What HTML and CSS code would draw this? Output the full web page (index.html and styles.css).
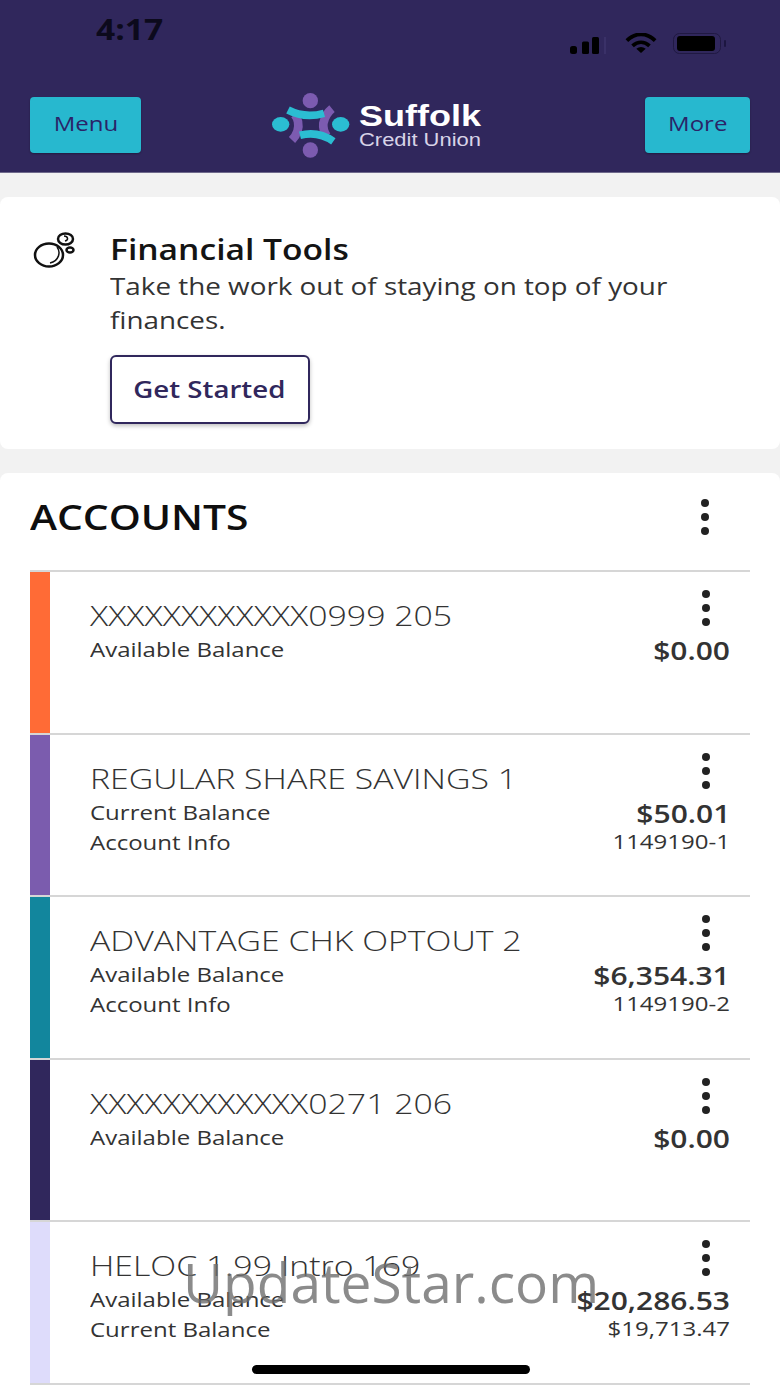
FILE: index.html
```html
<!DOCTYPE html>
<html lang="en">
<head>
<meta charset="utf-8">
<title>Suffolk Credit Union</title>
<link rel="stylesheet" href="styles.css">
</head>
<body>
<div class="screen">
  <header class="top">
    <div class="status">
      <span class="time">4:17</span>
      <div class="status-icons">
        <svg class="signal" width="37" height="17" viewBox="0 0 37 17"><rect x="0" y="9" width="7" height="8" rx="2.500"/><rect x="12" y="4.500" width="7" height="12.500" rx="1.500"/><rect x="22" y="0" width="7" height="17" rx="1.500"/><rect x="34" y="0" width="2" height="17" fill="#3a3168"/></svg>
        <svg class="wifi" width="32" height="20" viewBox="0 0 34 21"><path d="M2 8C11 -1 23 -1 32 8" fill="none" stroke="#000" stroke-width="4"/><path d="M8 13.500C13.500 8.500 20.500 8.500 26 13.500" fill="none" stroke="#000" stroke-width="4"/><path d="M12 16.500Q17 13 22 16.500L17 21Z"/></svg>
        <svg class="battery" width="54" height="21" viewBox="0 0 54 21"><rect x="0.500" y="0.500" width="47" height="20" rx="6" fill="none" stroke="#201942" stroke-width="1"/><rect x="4" y="3" width="38" height="15" rx="3"/><rect x="51" y="7" width="2" height="7" rx="1" fill="#1c1640"/></svg>
      </div>
    </div>
    <nav class="bar">
      <button class="nav-btn menu"><span class="btn-text">Menu</span></button>
      <div class="logo">
        <svg class="logo-mark" width="90" height="70" viewBox="0 0 270 210">
          <ellipse cx="127" cy="32" rx="23" ry="23" fill="#7c5bb0"/>
          <ellipse cx="127" cy="180" rx="23" ry="23" fill="#7c5bb0"/>
          <ellipse cx="38" cy="103" rx="26" ry="22" fill="#2bbdd2"/>
          <ellipse cx="218" cy="103" rx="26" ry="22" fill="#2bbdd2"/>
          <path d="M72 150Q96 125 90 95Q88 84 80 74" fill="none" stroke="#7c5bb0" stroke-width="26"/>
          <path d="M192 56Q172 72 166 100Q164 120 176 138" fill="none" stroke="#7c5bb0" stroke-width="26"/>
          <path d="M60 60Q110 86 168 70" fill="none" stroke="#2bbdd2" stroke-width="23"/>
          <path d="M96 136Q150 122 196 154" fill="none" stroke="#2bbdd2" stroke-width="23"/>
        </svg>
        <div class="logo-text"><span class="logo-name">Suffolk</span><span class="logo-sub">Credit Union</span></div>
      </div>
      <button class="nav-btn more"><span class="btn-text">More</span></button>
    </nav>
  </header>

  <section class="card tools">
    <svg class="tools-icon" width="46" height="40" viewBox="0 0 46 40" fill="none" stroke="#111" stroke-width="2.500">
      <ellipse cx="19" cy="25" rx="14" ry="11.500"/>
      <path d="M27 17C31 22 29 31 20 33" stroke-width="1.500"/>
      <ellipse cx="35.500" cy="9" rx="7.500" ry="5.500"/>
      <path d="M34 6C38 6 39 10 35 11" stroke-width="1.500"/>
      <ellipse cx="40" cy="20" rx="3.500" ry="2.500"/>
    </svg>
    <div class="tools-body">
      <h2 class="tools-title">Financial Tools</h2>
      <p class="tools-text">Take the work out of staying on top of your finances.</p>
      <button class="start"><span class="btn-text">Get Started</span></button>
    </div>
  </section>

  <section class="card accounts">
    <div class="acc-head">
      <h1 class="acc-title">ACCOUNTS</h1>
      <span class="kebab big"><i></i><i></i><i></i></span>
    </div>
    <ul class="acc-list">
      <li class="row c1">
        <div class="row-main">
          <div class="name">XXXXXXXXXXXX0999 205</div>
          <div class="label">Available Balance</div>
        </div>
        <div class="row-side">
          <span class="kebab"><i></i><i></i><i></i></span>
          <div class="amount">$0.00</div>
        </div>
      </li>
      <li class="row c2">
        <div class="row-main">
          <div class="name">REGULAR SHARE SAVINGS 1</div>
          <div class="label">Current Balance</div>
          <div class="label">Account Info</div>
        </div>
        <div class="row-side">
          <span class="kebab"><i></i><i></i><i></i></span>
          <div class="amount">$50.01</div>
          <div class="sub">1149190-1</div>
        </div>
      </li>
      <li class="row c3">
        <div class="row-main">
          <div class="name">ADVANTAGE CHK OPTOUT 2</div>
          <div class="label">Available Balance</div>
          <div class="label">Account Info</div>
        </div>
        <div class="row-side">
          <span class="kebab"><i></i><i></i><i></i></span>
          <div class="amount">$6,354.31</div>
          <div class="sub">1149190-2</div>
        </div>
      </li>
      <li class="row c4">
        <div class="row-main">
          <div class="name">XXXXXXXXXXXX0271 206</div>
          <div class="label">Available Balance</div>
        </div>
        <div class="row-side">
          <span class="kebab"><i></i><i></i><i></i></span>
          <div class="amount">$0.00</div>
        </div>
      </li>
      <li class="row c5">
        <div class="row-main">
          <div class="name">HELOC 1.99 Intro 169</div>
          <div class="label">Available Balance</div>
          <div class="label">Current Balance</div>
        </div>
        <div class="row-side">
          <span class="kebab"><i></i><i></i><i></i></span>
          <div class="amount">$20,286.53</div>
          <div class="sub">$19,713.47</div>
        </div>
      </li>
    </ul>
  </section>

  <div class="home-bar"></div>
  <div class="watermark">UpdateStar.com</div>
</div>
</body>
</html>
```
FILE: styles.css
```css
* { box-sizing: border-box; }
html, body { margin: 0; padding: 0; }
body { background: #f2f2f2; font-family: "Open Sans", sans-serif; color: #333; }
.screen { position: relative; width: 780px; height: 1387px; overflow: hidden; background: #f2f2f2; }

/* The reference is stretched horizontally, so its text is widened the same way */
.time, .btn-text, .logo-name, .logo-sub, .tools-title, .tools-text, .acc-title, .name, .label {
  transform: scaleX(1.2);
  transform-origin: left center;
}
.amount, .sub { transform: scaleX(1.2); transform-origin: right center; }
.btn-text { display: inline-block; transform-origin: center; }

.top { height: 173px; background: #30275c; border-bottom: 1px solid #6f6a8c; padding: 0 30px; display: flex; flex-direction: column; }
.status { height: 97px; display: flex; justify-content: space-between; }
.time { margin: 11px 0 0 66px; font-size: 28px; line-height: 36px; font-weight: 700; color: #0c0a1c; }
.status-icons { display: flex; align-items: flex-start; margin: 33px 23px 0 0; }
.signal { fill: #000; margin: 4px 18px 0 0; }
.wifi { fill: #000; margin-right: 16px; }
.battery { fill: #000; }

.bar { display: flex; justify-content: space-between; align-items: flex-start; }
.nav-btn { height: 56px; border: 0; border-radius: 4px; background: #27b8cf; color: #2a2468; font-family: "Open Sans", sans-serif; font-size: 20px; padding: 0 0 4px; box-shadow: 0 1px 2px rgba(0,0,0,0.300); }
.menu { width: 111px; }
.more { width: 105px; }
.logo { display: flex; align-items: center; gap: 1px; width: 214px; margin: -7px 36px 0 0; }
.logo-mark { flex: none; }
.logo-text { display: flex; flex-direction: column; width: 122px; color: #fff; font-family: "Liberation Sans", sans-serif; }
.logo-name { font-size: 30px; line-height: 28px; font-weight: 700; white-space: nowrap; }
.logo-sub { font-size: 18.300px; line-height: 19px; color: #d8d4e8; white-space: nowrap; }

.card { background: #fff; border-radius: 8px; }
.tools { margin-top: 24px; height: 252px; padding: 33px 30px 0 30px; display: flex; }
.tools-icon { flex: none; margin-right: 34px; }
.tools-body { flex: 1; }
.tools-title { margin: 0 0 1px; font-size: 28px; line-height: 38px; font-weight: 600; color: #141414; white-space: nowrap; }
.tools-text { margin: 0; width: 490px; font-size: 23.200px; line-height: 34px; color: #333; }
.start { margin-top: 18px; width: 200px; height: 69px; background: #fff; border: 2px solid #30275c; border-radius: 6px; color: #30275c; font-family: "Open Sans", sans-serif; font-size: 23px; font-weight: 600; padding: 0 2px 1px 0; box-shadow: 0 2px 4px rgba(0,0,0,0.250); }

.accounts { margin-top: 24px; height: 930px; padding: 0 30px; border-radius: 8px 8px 0 0; }
.acc-head { height: 97px; display: flex; justify-content: space-between; align-items: center; padding: 0 0 9px 0; }
.acc-title { margin: 0; font-size: 34px; font-weight: 600; color: #0e0e0e; line-height: 44px; }
.kebab { display: flex; flex-direction: column; align-items: center; gap: 6px; width: 12px; }
.kebab i { display: block; width: 8px; height: 8px; border-radius: 50%; background: #222; }
.big { margin-right: 39px; }

.acc-list { list-style: none; margin: 0; padding: 0; border-top: 2px solid #d6d6d6; }
.row { height: 162.500px; border-bottom: 2px solid #d6d6d6; padding: 17px 20px 0 60px; display: flex; justify-content: space-between; background: linear-gradient(var(--bar), var(--bar)) 0 0 / 20px 100% no-repeat padding-box; }
.row.c1 { --bar: #ff6b36; }
.row.c2 { --bar: #7b5cae; }
.row.c3 { --bar: #12869d; }
.row.c4 { --bar: #30275c; }
.row.c5 { --bar: #dedcfb; }
.name { font-size: 28.200px; line-height: 50px; font-weight: 300; color: #333; margin-top: 1px; white-space: nowrap; }
.label { font-size: 20px; line-height: 30px; color: #333; white-space: nowrap; }
.row-main .name + .label { margin-top: -5px; }
.row-side { display: flex; flex-direction: column; align-items: flex-end; }
.row-side .kebab { margin: 1px 18px 0 0; }
.amount { font-size: 25px; line-height: 32px; font-weight: 600; color: #333; margin-top: 8px; }
.sub { font-size: 20px; line-height: 26px; color: #333; }

.home-bar { position: absolute; left: 252px; top: 1365px; width: 278px; height: 9px; border-radius: 5px; background: #000; }
.watermark { position: absolute; left: 183px; top: 1245px; font-family: "Open Sans", sans-serif; font-size: 55px; line-height: 74px; color: rgba(110,110,110,0.800); white-space: nowrap; }
```
